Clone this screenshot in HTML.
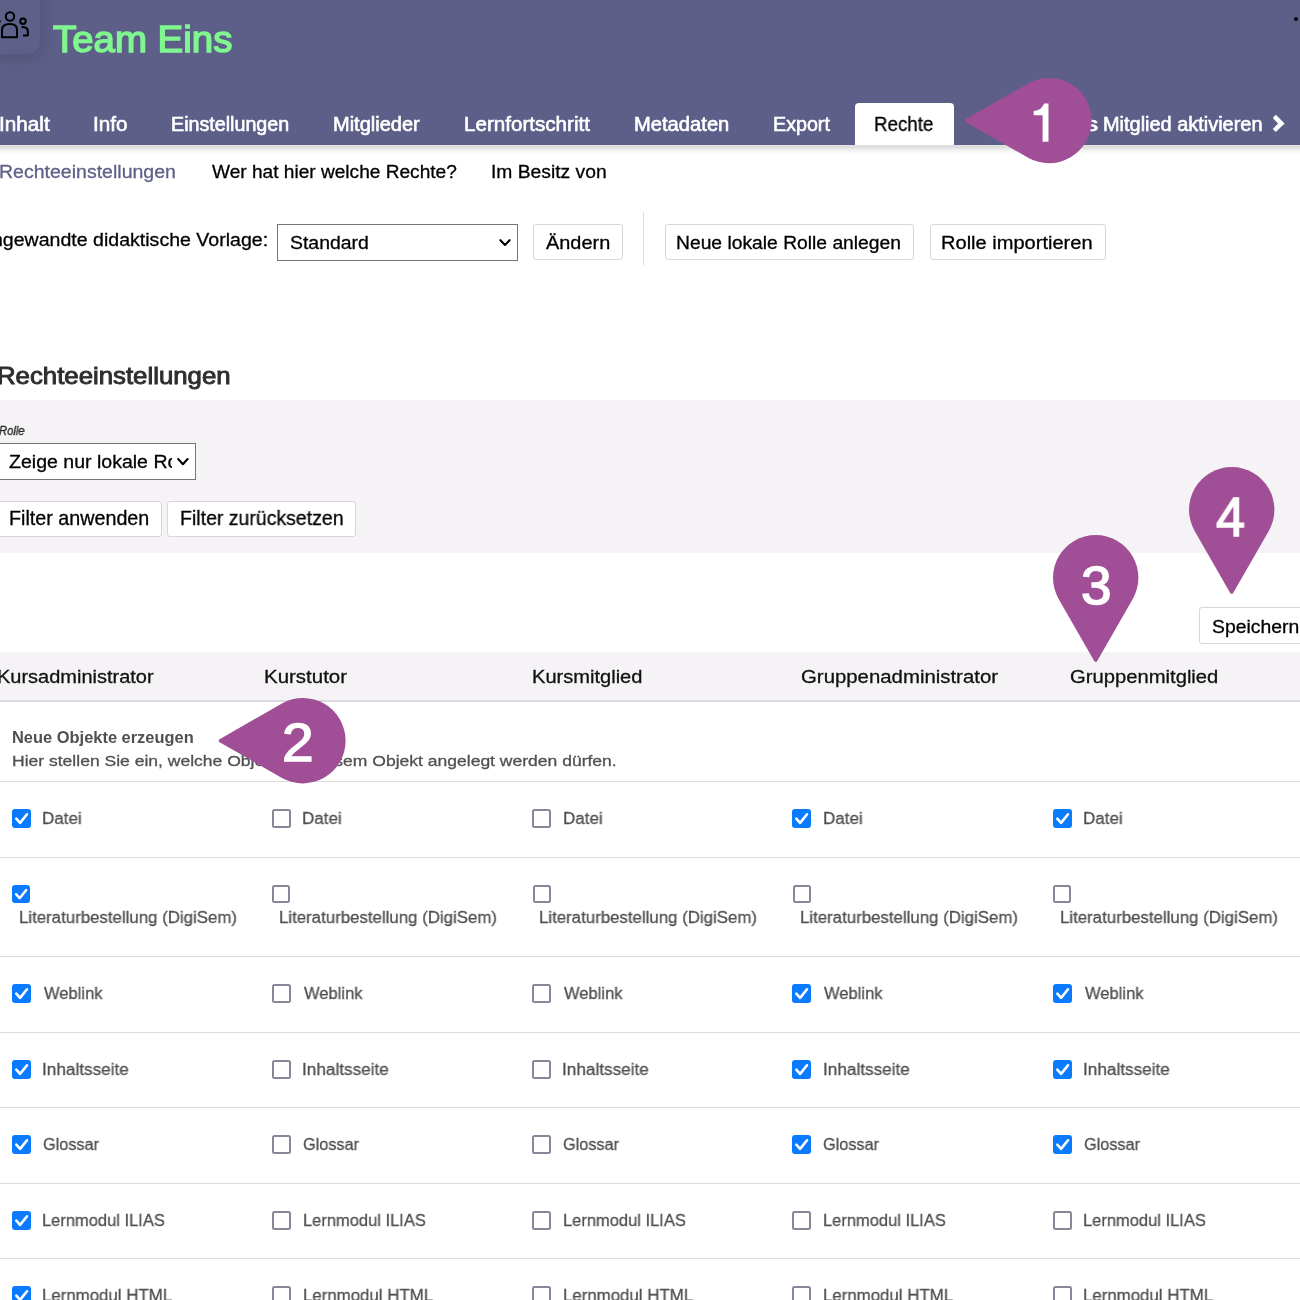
<!DOCTYPE html>
<html><head><meta charset="utf-8"><style>
html,body{margin:0;padding:0;width:1300px;height:1300px;overflow:hidden;background:#fff;position:relative}
body{font-family:"Liberation Sans", sans-serif}
.t{position:absolute;white-space:nowrap;transform-origin:0 0;will-change:transform}
.btn{position:absolute;background:#fff;border:1px solid #dbd4de;border-radius:3px;box-sizing:border-box}
.sel{position:absolute;background:#fff;border:1px solid #757575;box-sizing:border-box}
</style></head><body>
<!-- header -->
<div style="position:absolute;left:0;top:0;width:1300px;height:145px;background:#5d5f88"></div>
<div style="position:absolute;left:0;top:145px;width:1300px;height:10px;background:linear-gradient(rgba(0,0,0,0.11),rgba(0,0,0,0.14) 20%,rgba(0,0,0,0.06) 50%,rgba(0,0,0,0.015) 80%,rgba(0,0,0,0))"></div>
<div style="position:absolute;left:-14px;top:-14px;width:54px;height:68px;border-radius:12px;background:#5e6089;box-shadow:2px 3px 16px rgba(0,0,0,0.16)"></div>
<svg style="position:absolute;left:0;top:0" width="45" height="45">
  <circle cx="10" cy="16.5" r="4.2" fill="none" stroke="#000" stroke-width="2"/>
  <path d="M2,37.2 L2,30 Q2,24 10,24 Q17,24 17,30 L17,37.2 Z" fill="none" stroke="#000" stroke-width="2" stroke-linejoin="round"/>
  <circle cx="23" cy="21.3" r="2.7" fill="none" stroke="#000" stroke-width="2"/>
  <path d="M21.5,27 Q27.8,27 27.8,31 L27.8,35.5 L23,35.5" fill="none" stroke="#000" stroke-width="2" stroke-linejoin="round"/>
  <circle cx="0" cy="21.5" r="1" fill="#000"/>
</svg>
<div style="position:absolute;left:1293.7px;top:16.6px;width:4px;height:4px;border-radius:50%;background:#000"></div>
<div style="position:absolute;left:855px;top:103px;width:99px;height:42px;background:#fff;border-radius:4px 4px 0 0"></div>
<svg style="position:absolute;left:0;top:0" width="1300" height="150"><path d="M1275.8,114.8 L1284.6,123.5 L1275.8,132.1 L1272.8,128.9 L1278.1,123.5 L1272.8,117.9 Z" fill="#fff"/></svg>
<!-- form row -->
<div class="sel" style="left:277px;top:223.5px;width:241px;height:37.5px"></div>

<div class="btn" style="left:533px;top:224px;width:90px;height:36px"></div>
<div style="position:absolute;left:643px;top:212px;width:1px;height:53px;background:#dedede"></div>
<div class="btn" style="left:664.5px;top:224px;width:249px;height:36px"></div>
<div class="btn" style="left:929.5px;top:224px;width:176px;height:36px"></div>
<!-- filter panel -->
<div style="position:absolute;left:0;top:400px;width:1300px;height:153px;background:#f5f3f6"></div>
<div class="sel" style="left:-2px;top:443px;width:198px;height:36.5px"></div>

<div class="btn" style="left:-5px;top:500.5px;width:167px;height:36px"></div>
<div class="btn" style="left:167.3px;top:500.5px;width:188.5px;height:36px"></div>
<svg style="position:absolute;left:0;top:0;width:1300px;height:1300px;overflow:visible" width="1300" height="1300"><path d="M500.4,240.2 L505,245 L509.6,240.2" fill="none" stroke="#000" stroke-width="2.1" stroke-linecap="round" stroke-linejoin="round"/><path d="M178.2,459 L182.9,464.2 L187.6,459" fill="none" stroke="#000" stroke-width="2.1" stroke-linecap="round" stroke-linejoin="round"/></svg>
<!-- speichern -->
<div class="btn" style="left:1199.4px;top:607.4px;width:120px;height:36.2px"></div>
<!-- table header -->
<div style="position:absolute;left:0;top:652px;width:1300px;height:48px;background:#f5f3f6"></div>
<div style="position:absolute;left:0;top:700px;width:1300px;height:2px;background:#dddbe0"></div>
<div style="position:absolute;left:0;top:781px;width:1300px;height:1px;background:#dcdcdc"></div><div style="position:absolute;left:0;top:857px;width:1300px;height:1px;background:#dcdcdc"></div><div style="position:absolute;left:0;top:956px;width:1300px;height:1px;background:#dcdcdc"></div><div style="position:absolute;left:0;top:1032px;width:1300px;height:1px;background:#dcdcdc"></div><div style="position:absolute;left:0;top:1107px;width:1300px;height:1px;background:#dcdcdc"></div><div style="position:absolute;left:0;top:1183px;width:1300px;height:1px;background:#dcdcdc"></div><div style="position:absolute;left:0;top:1258px;width:1300px;height:1px;background:#dcdcdc"></div><div style="position:absolute;left:12px;top:809px;width:19px;height:19px;border-radius:3px;background:#0a7aff"><svg width="19" height="19" style="position:absolute;left:0;top:0"><path d="M4.30,9.70 L8.10,13.90 L15.00,5.30" fill="none" stroke="#fff" stroke-width="2.60" stroke-linecap="round" stroke-linejoin="round"/></svg></div><div style="position:absolute;left:272px;top:809px;width:15px;height:15px;border:2px solid #878799;border-radius:2.5px;background:#fff"></div><div style="position:absolute;left:532px;top:809px;width:15px;height:15px;border:2px solid #878799;border-radius:2.5px;background:#fff"></div><div style="position:absolute;left:792px;top:809px;width:19px;height:19px;border-radius:3px;background:#0a7aff"><svg width="19" height="19" style="position:absolute;left:0;top:0"><path d="M4.30,9.70 L8.10,13.90 L15.00,5.30" fill="none" stroke="#fff" stroke-width="2.60" stroke-linecap="round" stroke-linejoin="round"/></svg></div><div style="position:absolute;left:1053px;top:809px;width:19px;height:19px;border-radius:3px;background:#0a7aff"><svg width="19" height="19" style="position:absolute;left:0;top:0"><path d="M4.30,9.70 L8.10,13.90 L15.00,5.30" fill="none" stroke="#fff" stroke-width="2.60" stroke-linecap="round" stroke-linejoin="round"/></svg></div><div style="position:absolute;left:12px;top:885px;width:18px;height:18px;border-radius:3px;background:#0a7aff"><svg width="18" height="18" style="position:absolute;left:0;top:0"><path d="M4.07,9.19 L7.67,13.17 L14.21,5.02" fill="none" stroke="#fff" stroke-width="2.46" stroke-linecap="round" stroke-linejoin="round"/></svg></div><div style="position:absolute;left:272px;top:885px;width:14px;height:14px;border:2px solid #878799;border-radius:2.5px;background:#fff"></div><div style="position:absolute;left:533px;top:885px;width:14px;height:14px;border:2px solid #878799;border-radius:2.5px;background:#fff"></div><div style="position:absolute;left:793px;top:885px;width:14px;height:14px;border:2px solid #878799;border-radius:2.5px;background:#fff"></div><div style="position:absolute;left:1053px;top:885px;width:14px;height:14px;border:2px solid #878799;border-radius:2.5px;background:#fff"></div><div style="position:absolute;left:12px;top:984px;width:19px;height:19px;border-radius:3px;background:#0a7aff"><svg width="19" height="19" style="position:absolute;left:0;top:0"><path d="M4.30,9.70 L8.10,13.90 L15.00,5.30" fill="none" stroke="#fff" stroke-width="2.60" stroke-linecap="round" stroke-linejoin="round"/></svg></div><div style="position:absolute;left:272px;top:984px;width:15px;height:15px;border:2px solid #878799;border-radius:2.5px;background:#fff"></div><div style="position:absolute;left:532px;top:984px;width:15px;height:15px;border:2px solid #878799;border-radius:2.5px;background:#fff"></div><div style="position:absolute;left:792px;top:984px;width:19px;height:19px;border-radius:3px;background:#0a7aff"><svg width="19" height="19" style="position:absolute;left:0;top:0"><path d="M4.30,9.70 L8.10,13.90 L15.00,5.30" fill="none" stroke="#fff" stroke-width="2.60" stroke-linecap="round" stroke-linejoin="round"/></svg></div><div style="position:absolute;left:1053px;top:984px;width:19px;height:19px;border-radius:3px;background:#0a7aff"><svg width="19" height="19" style="position:absolute;left:0;top:0"><path d="M4.30,9.70 L8.10,13.90 L15.00,5.30" fill="none" stroke="#fff" stroke-width="2.60" stroke-linecap="round" stroke-linejoin="round"/></svg></div><div style="position:absolute;left:12px;top:1060px;width:19px;height:19px;border-radius:3px;background:#0a7aff"><svg width="19" height="19" style="position:absolute;left:0;top:0"><path d="M4.30,9.70 L8.10,13.90 L15.00,5.30" fill="none" stroke="#fff" stroke-width="2.60" stroke-linecap="round" stroke-linejoin="round"/></svg></div><div style="position:absolute;left:272px;top:1060px;width:15px;height:15px;border:2px solid #878799;border-radius:2.5px;background:#fff"></div><div style="position:absolute;left:532px;top:1060px;width:15px;height:15px;border:2px solid #878799;border-radius:2.5px;background:#fff"></div><div style="position:absolute;left:792px;top:1060px;width:19px;height:19px;border-radius:3px;background:#0a7aff"><svg width="19" height="19" style="position:absolute;left:0;top:0"><path d="M4.30,9.70 L8.10,13.90 L15.00,5.30" fill="none" stroke="#fff" stroke-width="2.60" stroke-linecap="round" stroke-linejoin="round"/></svg></div><div style="position:absolute;left:1053px;top:1060px;width:19px;height:19px;border-radius:3px;background:#0a7aff"><svg width="19" height="19" style="position:absolute;left:0;top:0"><path d="M4.30,9.70 L8.10,13.90 L15.00,5.30" fill="none" stroke="#fff" stroke-width="2.60" stroke-linecap="round" stroke-linejoin="round"/></svg></div><div style="position:absolute;left:12px;top:1135px;width:19px;height:19px;border-radius:3px;background:#0a7aff"><svg width="19" height="19" style="position:absolute;left:0;top:0"><path d="M4.30,9.70 L8.10,13.90 L15.00,5.30" fill="none" stroke="#fff" stroke-width="2.60" stroke-linecap="round" stroke-linejoin="round"/></svg></div><div style="position:absolute;left:272px;top:1135px;width:15px;height:15px;border:2px solid #878799;border-radius:2.5px;background:#fff"></div><div style="position:absolute;left:532px;top:1135px;width:15px;height:15px;border:2px solid #878799;border-radius:2.5px;background:#fff"></div><div style="position:absolute;left:792px;top:1135px;width:19px;height:19px;border-radius:3px;background:#0a7aff"><svg width="19" height="19" style="position:absolute;left:0;top:0"><path d="M4.30,9.70 L8.10,13.90 L15.00,5.30" fill="none" stroke="#fff" stroke-width="2.60" stroke-linecap="round" stroke-linejoin="round"/></svg></div><div style="position:absolute;left:1053px;top:1135px;width:19px;height:19px;border-radius:3px;background:#0a7aff"><svg width="19" height="19" style="position:absolute;left:0;top:0"><path d="M4.30,9.70 L8.10,13.90 L15.00,5.30" fill="none" stroke="#fff" stroke-width="2.60" stroke-linecap="round" stroke-linejoin="round"/></svg></div><div style="position:absolute;left:12px;top:1211px;width:19px;height:19px;border-radius:3px;background:#0a7aff"><svg width="19" height="19" style="position:absolute;left:0;top:0"><path d="M4.30,9.70 L8.10,13.90 L15.00,5.30" fill="none" stroke="#fff" stroke-width="2.60" stroke-linecap="round" stroke-linejoin="round"/></svg></div><div style="position:absolute;left:272px;top:1211px;width:15px;height:15px;border:2px solid #878799;border-radius:2.5px;background:#fff"></div><div style="position:absolute;left:532px;top:1211px;width:15px;height:15px;border:2px solid #878799;border-radius:2.5px;background:#fff"></div><div style="position:absolute;left:792px;top:1211px;width:15px;height:15px;border:2px solid #878799;border-radius:2.5px;background:#fff"></div><div style="position:absolute;left:1053px;top:1211px;width:15px;height:15px;border:2px solid #878799;border-radius:2.5px;background:#fff"></div><div style="position:absolute;left:12px;top:1286px;width:19px;height:19px;border-radius:3px;background:#0a7aff"><svg width="19" height="19" style="position:absolute;left:0;top:0"><path d="M4.30,9.70 L8.10,13.90 L15.00,5.30" fill="none" stroke="#fff" stroke-width="2.60" stroke-linecap="round" stroke-linejoin="round"/></svg></div><div style="position:absolute;left:272px;top:1286px;width:15px;height:15px;border:2px solid #878799;border-radius:2.5px;background:#fff"></div><div style="position:absolute;left:532px;top:1286px;width:15px;height:15px;border:2px solid #878799;border-radius:2.5px;background:#fff"></div><div style="position:absolute;left:792px;top:1286px;width:15px;height:15px;border:2px solid #878799;border-radius:2.5px;background:#fff"></div><div style="position:absolute;left:1053px;top:1286px;width:15px;height:15px;border:2px solid #878799;border-radius:2.5px;background:#fff"></div>
<div class="t" style="left:53.18px;top:21.00px;font-size:37.06px;line-height:37.06px;color:#80f690;font-weight:400;font-style:normal;transform:scaleX(1.0369);-webkit-text-stroke:1.5px #80f690;">Team Eins</div>
<div class="t" style="left:-1.07px;top:115.00px;font-size:19.69px;line-height:19.69px;color:#fff;font-weight:400;font-style:normal;transform:scaleX(1.0528);-webkit-text-stroke:0.6px #fff;">Inhalt</div>
<div class="t" style="left:93.24px;top:115.00px;font-size:19.69px;line-height:19.69px;color:#fff;font-weight:400;font-style:normal;transform:scaleX(1.0505);-webkit-text-stroke:0.6px #fff;">Info</div>
<div class="t" style="left:171.33px;top:115.00px;font-size:19.69px;line-height:19.69px;color:#fff;font-weight:400;font-style:normal;transform:scaleX(0.9959);-webkit-text-stroke:0.6px #fff;">Einstellungen</div>
<div class="t" style="left:333.20px;top:115.00px;font-size:19.69px;line-height:19.69px;color:#fff;font-weight:400;font-style:normal;transform:scaleX(1.0162);-webkit-text-stroke:0.6px #fff;">Mitglieder</div>
<div class="t" style="left:464.15px;top:115.00px;font-size:19.69px;line-height:19.69px;color:#fff;font-weight:400;font-style:normal;transform:scaleX(1.0465);-webkit-text-stroke:0.6px #fff;">Lernfortschritt</div>
<div class="t" style="left:634.39px;top:115.00px;font-size:19.69px;line-height:19.69px;color:#fff;font-weight:400;font-style:normal;transform:scaleX(1.0245);-webkit-text-stroke:0.6px #fff;">Metadaten</div>
<div class="t" style="left:773.43px;top:115.00px;font-size:19.69px;line-height:19.69px;color:#fff;font-weight:400;font-style:normal;transform:scaleX(0.9948);-webkit-text-stroke:0.6px #fff;">Export</div>
<div class="t" style="left:874.25px;top:115.00px;font-size:19.69px;line-height:19.69px;color:#000;font-weight:400;font-style:normal;transform:scaleX(0.9499);-webkit-text-stroke:0.3px #000;">Rechte</div>
<div class="t" style="left:1103.31px;top:115.00px;font-size:19.69px;line-height:19.69px;color:#fff;font-weight:400;font-style:normal;transform:scaleX(1.0120);-webkit-text-stroke:0.6px #fff;">Mitglied aktivieren</div>
<div class="t" style="left:1060.30px;top:115.00px;font-size:19.69px;line-height:19.69px;color:#fff;font-weight:400;font-style:normal;transform:scaleX(1.3972);-webkit-text-stroke:0.6px #fff;">Als</div>
<div class="t" style="left:-0.61px;top:163.00px;font-size:18.90px;line-height:18.90px;color:#5f5f88;font-weight:400;font-style:normal;transform:scaleX(1.0335);-webkit-text-stroke:0.3px #5f5f88;">Rechteeinstellungen</div>
<div class="t" style="left:211.65px;top:163.00px;font-size:18.90px;line-height:18.90px;color:#000;font-weight:400;font-style:normal;transform:scaleX(1.0108);-webkit-text-stroke:0.3px #000;">Wer hat hier welche Rechte?</div>
<div class="t" style="left:490.82px;top:163.00px;font-size:18.90px;line-height:18.90px;color:#000;font-weight:400;font-style:normal;transform:scaleX(1.0195);-webkit-text-stroke:0.3px #000;">Im Besitz von</div>
<div class="t" style="left:-8.02px;top:231.00px;font-size:18.75px;line-height:18.75px;color:#000;font-weight:400;font-style:normal;transform:scaleX(1.0428);-webkit-text-stroke:0.3px #000;">ngewandte didaktische Vorlage:</div>
<div class="t" style="left:290.17px;top:234.00px;font-size:18.90px;line-height:18.90px;color:#000;font-weight:400;font-style:normal;transform:scaleX(1.0284);-webkit-text-stroke:0.3px #000;">Standard</div>
<div class="t" style="left:546.15px;top:234.00px;font-size:18.90px;line-height:18.90px;color:#000;font-weight:400;font-style:normal;transform:scaleX(1.0540);-webkit-text-stroke:0.3px #000;">Ändern</div>
<div class="t" style="left:676.41px;top:234.00px;font-size:18.90px;line-height:18.90px;color:#000;font-weight:400;font-style:normal;transform:scaleX(1.0201);-webkit-text-stroke:0.3px #000;">Neue lokale Rolle anlegen</div>
<div class="t" style="left:941.35px;top:234.00px;font-size:18.90px;line-height:18.90px;color:#000;font-weight:400;font-style:normal;transform:scaleX(1.0617);-webkit-text-stroke:0.3px #000;">Rolle importieren</div>
<div class="t" style="left:-3.11px;top:365.00px;font-size:23.26px;line-height:23.26px;color:#2e2e2e;font-weight:400;font-style:normal;transform:scaleX(1.1085);-webkit-text-stroke:0.9px #2e2e2e;">Rechteeinstellungen</div>
<div class="t" style="left:-1.18px;top:425.00px;font-size:12.65px;line-height:12.65px;color:#222;font-weight:400;font-style:italic;transform:scaleX(0.8828);-webkit-text-stroke:0.3px #222;">Rolle</div>
<div style="position:absolute;left:0px;top:443.00px;width:171.5px;height:38.75px;overflow:hidden"><div class="t" style="left:9.26px;top:453.00px;font-size:18.75px;line-height:18.75px;color:#000;font-weight:400;font-style:normal;transform:scaleX(1.0418);-webkit-text-stroke:0.3px #000;;left:9.26px;top:10px">Zeige nur lokale Rollen</div></div>
<div class="t" style="left:9.07px;top:509.00px;font-size:19.62px;line-height:19.62px;color:#000;font-weight:400;font-style:normal;transform:scaleX(1.0055);-webkit-text-stroke:0.3px #000;">Filter anwenden</div>
<div class="t" style="left:179.59px;top:509.00px;font-size:19.62px;line-height:19.62px;color:#000;font-weight:400;font-style:normal;transform:scaleX(0.9939);-webkit-text-stroke:0.3px #000;">Filter zurücksetzen</div>
<div class="t" style="left:1211.78px;top:618.00px;font-size:18.75px;line-height:18.75px;color:#000;font-weight:400;font-style:normal;transform:scaleX(1.0323);-webkit-text-stroke:0.3px #000;">Speichern</div>
<div class="t" style="left:-3.45px;top:668.00px;font-size:18.75px;line-height:18.75px;color:#111;font-weight:400;font-style:normal;transform:scaleX(1.0656);-webkit-text-stroke:0.3px #111;">Kursadministrator</div>
<div class="t" style="left:263.81px;top:668.00px;font-size:18.75px;line-height:18.75px;color:#111;font-weight:400;font-style:normal;transform:scaleX(1.0911);-webkit-text-stroke:0.3px #111;">Kurstutor</div>
<div class="t" style="left:532.04px;top:668.00px;font-size:18.75px;line-height:18.75px;color:#111;font-weight:400;font-style:normal;transform:scaleX(1.0705);-webkit-text-stroke:0.3px #111;">Kursmitglied</div>
<div class="t" style="left:800.63px;top:668.00px;font-size:18.75px;line-height:18.75px;color:#111;font-weight:400;font-style:normal;transform:scaleX(1.0863);-webkit-text-stroke:0.3px #111;">Gruppenadministrator</div>
<div class="t" style="left:1070.14px;top:668.00px;font-size:18.75px;line-height:18.75px;color:#111;font-weight:400;font-style:normal;transform:scaleX(1.0783);-webkit-text-stroke:0.3px #111;">Gruppenmitglied</div>
<div class="t" style="left:12.01px;top:729.00px;font-size:16.13px;line-height:16.13px;color:#505050;font-weight:700;font-style:normal;transform:scaleX(1.0200);">Neue Objekte erzeugen</div>
<div class="t" style="left:11.75px;top:753.00px;font-size:15.41px;line-height:15.41px;color:#505050;font-weight:400;font-style:normal;transform:scaleX(1.1371);-webkit-text-stroke:0.3px #505050;">Hier stellen Sie ein, welche Objekte in diesem Objekt angelegt werden dürfen.</div>
<div class="t" style="left:42.39px;top:810.00px;font-size:17.30px;line-height:17.30px;color:#505050;font-weight:400;font-style:normal;transform:scaleX(0.9837);-webkit-text-stroke:0.3px #505050;">Datei</div>
<div class="t" style="left:302.49px;top:810.00px;font-size:17.30px;line-height:17.30px;color:#505050;font-weight:400;font-style:normal;transform:scaleX(0.9837);-webkit-text-stroke:0.3px #505050;">Datei</div>
<div class="t" style="left:562.59px;top:810.00px;font-size:17.30px;line-height:17.30px;color:#505050;font-weight:400;font-style:normal;transform:scaleX(0.9837);-webkit-text-stroke:0.3px #505050;">Datei</div>
<div class="t" style="left:822.89px;top:810.00px;font-size:17.30px;line-height:17.30px;color:#505050;font-weight:400;font-style:normal;transform:scaleX(0.9837);-webkit-text-stroke:0.3px #505050;">Datei</div>
<div class="t" style="left:1083.39px;top:810.00px;font-size:17.30px;line-height:17.30px;color:#505050;font-weight:400;font-style:normal;transform:scaleX(0.9837);-webkit-text-stroke:0.3px #505050;">Datei</div>
<div class="t" style="left:19.20px;top:909.00px;font-size:17.30px;line-height:17.30px;color:#505050;font-weight:400;font-style:normal;transform:scaleX(0.9739);-webkit-text-stroke:0.3px #505050;">Literaturbestellung (DigiSem)</div>
<div class="t" style="left:279.30px;top:909.00px;font-size:17.30px;line-height:17.30px;color:#505050;font-weight:400;font-style:normal;transform:scaleX(0.9739);-webkit-text-stroke:0.3px #505050;">Literaturbestellung (DigiSem)</div>
<div class="t" style="left:539.40px;top:909.00px;font-size:17.30px;line-height:17.30px;color:#505050;font-weight:400;font-style:normal;transform:scaleX(0.9739);-webkit-text-stroke:0.3px #505050;">Literaturbestellung (DigiSem)</div>
<div class="t" style="left:799.70px;top:909.00px;font-size:17.30px;line-height:17.30px;color:#505050;font-weight:400;font-style:normal;transform:scaleX(0.9739);-webkit-text-stroke:0.3px #505050;">Literaturbestellung (DigiSem)</div>
<div class="t" style="left:1060.20px;top:909.00px;font-size:17.30px;line-height:17.30px;color:#505050;font-weight:400;font-style:normal;transform:scaleX(0.9739);-webkit-text-stroke:0.3px #505050;">Literaturbestellung (DigiSem)</div>
<div class="t" style="left:43.75px;top:985.00px;font-size:17.30px;line-height:17.30px;color:#505050;font-weight:400;font-style:normal;transform:scaleX(0.9564);-webkit-text-stroke:0.3px #505050;">Weblink</div>
<div class="t" style="left:303.85px;top:985.00px;font-size:17.30px;line-height:17.30px;color:#505050;font-weight:400;font-style:normal;transform:scaleX(0.9564);-webkit-text-stroke:0.3px #505050;">Weblink</div>
<div class="t" style="left:563.95px;top:985.00px;font-size:17.30px;line-height:17.30px;color:#505050;font-weight:400;font-style:normal;transform:scaleX(0.9564);-webkit-text-stroke:0.3px #505050;">Weblink</div>
<div class="t" style="left:824.25px;top:985.00px;font-size:17.30px;line-height:17.30px;color:#505050;font-weight:400;font-style:normal;transform:scaleX(0.9564);-webkit-text-stroke:0.3px #505050;">Weblink</div>
<div class="t" style="left:1084.75px;top:985.00px;font-size:17.30px;line-height:17.30px;color:#505050;font-weight:400;font-style:normal;transform:scaleX(0.9564);-webkit-text-stroke:0.3px #505050;">Weblink</div>
<div class="t" style="left:42.20px;top:1061.00px;font-size:17.30px;line-height:17.30px;color:#505050;font-weight:400;font-style:normal;transform:scaleX(0.9928);-webkit-text-stroke:0.3px #505050;">Inhaltsseite</div>
<div class="t" style="left:302.30px;top:1061.00px;font-size:17.30px;line-height:17.30px;color:#505050;font-weight:400;font-style:normal;transform:scaleX(0.9928);-webkit-text-stroke:0.3px #505050;">Inhaltsseite</div>
<div class="t" style="left:562.40px;top:1061.00px;font-size:17.30px;line-height:17.30px;color:#505050;font-weight:400;font-style:normal;transform:scaleX(0.9928);-webkit-text-stroke:0.3px #505050;">Inhaltsseite</div>
<div class="t" style="left:822.70px;top:1061.00px;font-size:17.30px;line-height:17.30px;color:#505050;font-weight:400;font-style:normal;transform:scaleX(0.9928);-webkit-text-stroke:0.3px #505050;">Inhaltsseite</div>
<div class="t" style="left:1083.20px;top:1061.00px;font-size:17.30px;line-height:17.30px;color:#505050;font-weight:400;font-style:normal;transform:scaleX(0.9928);-webkit-text-stroke:0.3px #505050;">Inhaltsseite</div>
<div class="t" style="left:42.94px;top:1136.00px;font-size:17.30px;line-height:17.30px;color:#505050;font-weight:400;font-style:normal;transform:scaleX(0.9401);-webkit-text-stroke:0.3px #505050;">Glossar</div>
<div class="t" style="left:303.04px;top:1136.00px;font-size:17.30px;line-height:17.30px;color:#505050;font-weight:400;font-style:normal;transform:scaleX(0.9401);-webkit-text-stroke:0.3px #505050;">Glossar</div>
<div class="t" style="left:563.14px;top:1136.00px;font-size:17.30px;line-height:17.30px;color:#505050;font-weight:400;font-style:normal;transform:scaleX(0.9401);-webkit-text-stroke:0.3px #505050;">Glossar</div>
<div class="t" style="left:823.44px;top:1136.00px;font-size:17.30px;line-height:17.30px;color:#505050;font-weight:400;font-style:normal;transform:scaleX(0.9401);-webkit-text-stroke:0.3px #505050;">Glossar</div>
<div class="t" style="left:1083.94px;top:1136.00px;font-size:17.30px;line-height:17.30px;color:#505050;font-weight:400;font-style:normal;transform:scaleX(0.9401);-webkit-text-stroke:0.3px #505050;">Glossar</div>
<div class="t" style="left:42.43px;top:1212.00px;font-size:17.30px;line-height:17.30px;color:#505050;font-weight:400;font-style:normal;transform:scaleX(0.9542);-webkit-text-stroke:0.3px #505050;">Lernmodul ILIAS</div>
<div class="t" style="left:302.53px;top:1212.00px;font-size:17.30px;line-height:17.30px;color:#505050;font-weight:400;font-style:normal;transform:scaleX(0.9542);-webkit-text-stroke:0.3px #505050;">Lernmodul ILIAS</div>
<div class="t" style="left:562.63px;top:1212.00px;font-size:17.30px;line-height:17.30px;color:#505050;font-weight:400;font-style:normal;transform:scaleX(0.9542);-webkit-text-stroke:0.3px #505050;">Lernmodul ILIAS</div>
<div class="t" style="left:822.93px;top:1212.00px;font-size:17.30px;line-height:17.30px;color:#505050;font-weight:400;font-style:normal;transform:scaleX(0.9542);-webkit-text-stroke:0.3px #505050;">Lernmodul ILIAS</div>
<div class="t" style="left:1083.43px;top:1212.00px;font-size:17.30px;line-height:17.30px;color:#505050;font-weight:400;font-style:normal;transform:scaleX(0.9542);-webkit-text-stroke:0.3px #505050;">Lernmodul ILIAS</div>
<div class="t" style="left:42.40px;top:1287.00px;font-size:17.30px;line-height:17.30px;color:#505050;font-weight:400;font-style:normal;transform:scaleX(0.9743);-webkit-text-stroke:0.3px #505050;">Lernmodul HTML</div>
<div class="t" style="left:302.50px;top:1287.00px;font-size:17.30px;line-height:17.30px;color:#505050;font-weight:400;font-style:normal;transform:scaleX(0.9743);-webkit-text-stroke:0.3px #505050;">Lernmodul HTML</div>
<div class="t" style="left:562.60px;top:1287.00px;font-size:17.30px;line-height:17.30px;color:#505050;font-weight:400;font-style:normal;transform:scaleX(0.9743);-webkit-text-stroke:0.3px #505050;">Lernmodul HTML</div>
<div class="t" style="left:822.90px;top:1287.00px;font-size:17.30px;line-height:17.30px;color:#505050;font-weight:400;font-style:normal;transform:scaleX(0.9743);-webkit-text-stroke:0.3px #505050;">Lernmodul HTML</div>
<div class="t" style="left:1083.40px;top:1287.00px;font-size:17.30px;line-height:17.30px;color:#505050;font-weight:400;font-style:normal;transform:scaleX(0.9743);-webkit-text-stroke:0.3px #505050;">Lernmodul HTML</div>
<svg style="position:absolute;left:0;top:0" width="1300" height="1300">
<path d="M965.80,119.07 L1028.14,83.46 A42.6,42.6 0 1 1 1028.14,157.74 L965.80,122.13 Q964.80,120.60 965.80,119.07 Z" fill="#a04f96"/>
<path d="M219.20,739.39 L281.94,703.50 A42.7,42.7 0 1 1 281.94,777.90 L219.20,742.01 Q218.20,740.70 219.20,739.39 Z" fill="#a04f96"/>
<path d="M1094.35,661.30 L1058.50,598.66 A42.7,42.7 0 1 1 1132.90,598.66 L1097.05,661.30 Q1095.70,662.30 1094.35,661.30 Z" fill="#a04f96"/>
<path d="M1230.35,593.30 L1194.50,530.66 A42.7,42.7 0 1 1 1268.90,530.66 L1233.05,593.30 Q1231.70,594.30 1230.35,593.30 Z" fill="#a04f96"/>
<path d="M1044.2,103.6 L1048.5,103.6 L1048.5,141.8 L1042.6,141.8 L1042.6,115.2 L1033.7,115.2 L1033.7,110.9 Q1039.8,110.6 1041.6,107.6 Q1043.2,105.4 1044.2,103.6 Z" fill="#fff"/>
</svg>
<div class="t" style="left:281.75px;top:716.00px;font-size:53.20px;line-height:53.20px;color:#fff;font-weight:400;font-style:normal;transform:scaleX(1.0707);-webkit-text-stroke:1.4px #fff;">2</div>
<div class="t" style="left:1080.65px;top:559.00px;font-size:53.92px;line-height:53.92px;color:#fff;font-weight:400;font-style:normal;transform:scaleX(1.0218);-webkit-text-stroke:1.4px #fff;">3</div>
<div class="t" style="left:1216.06px;top:491.00px;font-size:54.65px;line-height:54.65px;color:#fff;font-weight:400;font-style:normal;transform:scaleX(0.9544);-webkit-text-stroke:1.4px #fff;">4</div>
</body></html>
